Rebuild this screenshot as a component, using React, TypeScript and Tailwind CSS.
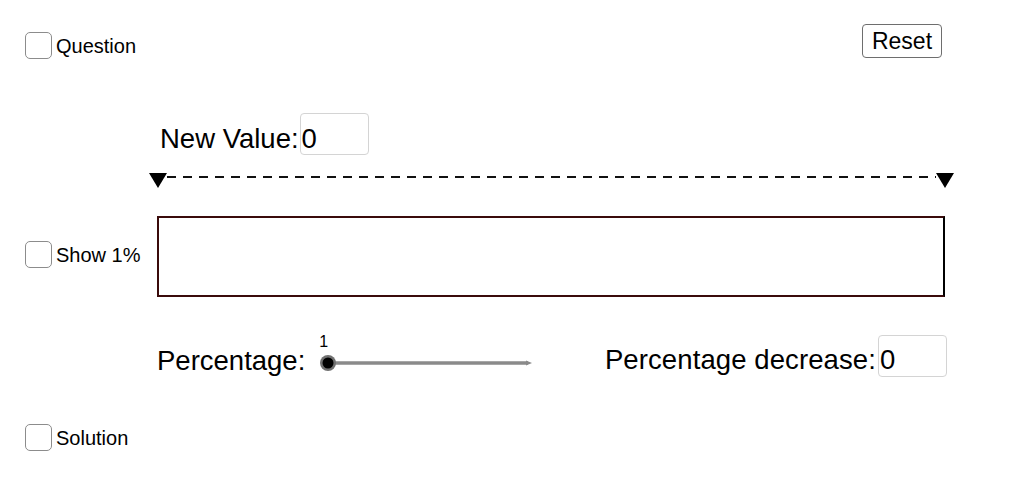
import React from "react";

function CheckBox({ label }: { label: string }) {
  return (
    <label className="flex items-center gap-[4px] text-[20px] leading-none">
      <span className="block h-[27px] w-[27px] rounded-[5px] border-[1.5px] border-[#8c8c8c] bg-white" />
      <span>{label}</span>
    </label>
  );
}

function ValueBox({ value, padTop }: { value: string; padTop: string }) {
  return (
    <div className={`h-[42px] w-[69px] rounded-[4px] border border-[#d4d4d4] pl-[1px] text-[27.5px] leading-none ${padTop}`}>
      {value}
    </div>
  );
}

function Slider() {
  return (
    <div className="ml-[11px] flex flex-col">
      <div className="mt-[1px] ml-[3px] text-[16px] leading-none">1</div>
      <svg width="222" height="26">
        <line x1="12" y1="13" x2="212" y2="13" stroke="#8a8a8a" strokeWidth="3.5" />
        <polygon points="210,10.5 216,13 210,15.5" fill="#8a8a8a" />
        <circle cx="12" cy="13" r="8" fill="#707070" />
        <circle cx="12" cy="13" r="5.5" fill="#000" />
      </svg>
    </div>
  );
}

export default function App() {
  return (
    <div className="h-[492px] w-[1026px] overflow-hidden bg-white font-['Liberation_Sans',Arial,sans-serif] text-black">
      {/* top row */}
      <div className="flex items-start justify-between pt-[24px] pl-[25px] pr-[84px]">
        <div className="mt-[8px]">
          <CheckBox label="Question" />
        </div>
        <button className="h-[34px] w-[80px] rounded-[4px] border-[1.5px] border-[#6e6e6e] bg-white text-[23px] leading-none">
          Reset
        </button>
      </div>

      {/* new value */}
      <div className="mt-[54px] flex items-start pl-[160px]">
        <div className="mt-[12px] text-[27.5px] leading-none">New Value:</div>
        <div className="ml-[1px]">
          <ValueBox value="0" padTop="pt-[11px]" />
        </div>
      </div>

      {/* dashed range */}
      <svg width="806" height="16" className="mt-[18px] ml-[149px] block">
        <line x1="18" y1="4" x2="787" y2="4" stroke="#111" strokeWidth="2" strokeDasharray="9 7" />
        <polygon points="0,0 18,0 9,15" fill="#000" />
        <polygon points="787,0 805,0 796,15" fill="#000" />
      </svg>

      {/* bar */}
      <div className="mt-[27px] flex items-start">
        <div className="w-[157px] pl-[25px] pt-[25px]">
          <CheckBox label="Show 1%" />
        </div>
        <div className="h-[81px] w-[788px] border-2 border-[#3a0b0b] border-r-black bg-white" />
      </div>

      {/* percentage row */}
      <div className="mt-[36px] flex items-start">
        <div className="ml-[157px] mt-[14px] text-[27.5px] leading-none">Percentage:</div>
        <Slider />
        <div className="ml-auto mr-[79px] flex items-start">
          <div className="mt-[13px] text-[27.5px] leading-none tracking-[0.1px]">Percentage decrease:</div>
          <div className="ml-[2px] mt-[2px]">
            <ValueBox value="0" padTop="pt-[10px]" />
          </div>
        </div>
      </div>

      {/* solution */}
      <div className="mt-[47px] pl-[25px]">
        <CheckBox label="Solution" />
      </div>
    </div>
  );
}
